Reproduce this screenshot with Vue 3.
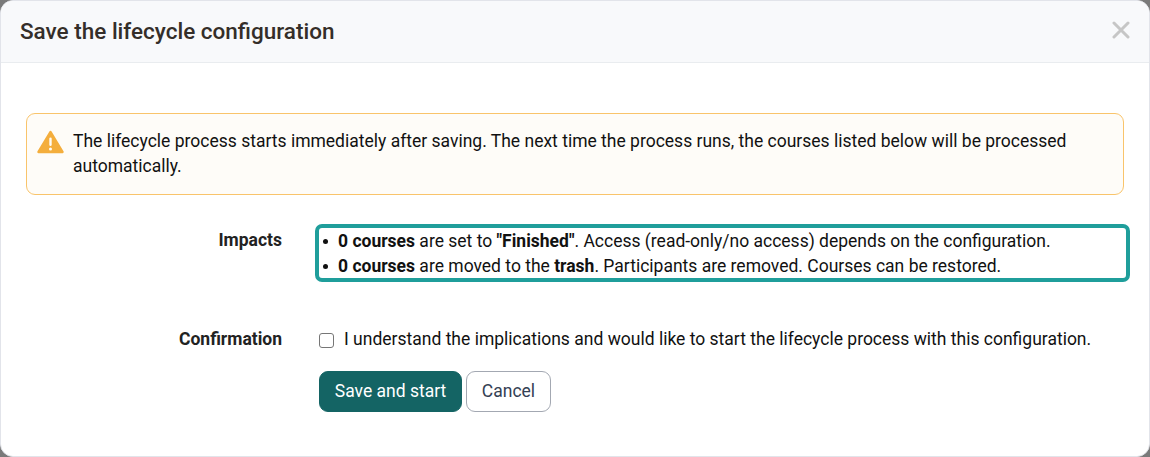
<template>
  <div class="modal">
    <!-- Header -->
    <div class="modal-header">
      <h4 class="modal-title">Save the lifecycle configuration</h4>
      <button class="close-button" aria-label="Close">
        <svg width="18" height="18" viewBox="0 0 18 18">
          <path d="M2 2 L16 16 M16 2 L2 16" stroke="#c6c6c6" stroke-width="3" stroke-linecap="round" fill="none" />
        </svg>
      </button>
    </div>

    <div class="modal-body">
      <!-- Warning -->
      <div class="alert">
        <svg class="alert-icon" width="27" height="24" viewBox="0 0 27 24">
          <path d="M13.5 2.2 L25.4 22 H1.6 Z" fill="#f4ae3d" stroke="#f4ae3d" stroke-width="2.6" stroke-linejoin="round" />
          <rect x="12.3" y="7.5" width="2.4" height="8.5" rx="1.2" fill="#fffdf8" />
          <circle cx="13.5" cy="19" r="1.5" fill="#fffdf8" />
        </svg>
        <p class="alert-text">
          The lifecycle process starts immediately after saving. The next time the process runs, the courses listed below will be processed automatically.
        </p>
      </div>

      <!-- Form -->
      <div class="form-row impacts-row">
        <div class="form-label">Impacts</div>
        <ul class="impacts">
          <li><strong>0 courses</strong> are set to <strong>"Finished"</strong>. Access (read-only/no access) depends on the configuration.</li>
          <li><strong>0 courses</strong> are moved to the <strong>trash</strong>. Participants are removed. Courses can be restored.</li>
        </ul>
      </div>

      <div class="form-row confirm-row">
        <div class="form-label">Confirmation</div>
        <label class="confirm">
          <input type="checkbox" class="confirm-box" />
          <span>I understand the implications and would like to start the lifecycle process with this configuration.</span>
        </label>
      </div>

      <div class="actions">
        <button class="btn btn-primary">Save and start</button>
        <button class="btn btn-default">Cancel</button>
      </div>
    </div>
  </div>
</template>

<script setup>
</script>

<style>
html,
body {
  background: #7a7a7a;
}
</style>

<style scoped>
.modal {
  box-sizing: border-box;
  width: 1150px;
  height: 457px;
  background: #fff;
  border: 1px solid #e2e4ea;
  border-radius: 13px;
  overflow: hidden;
  font-family: Roboto, "Liberation Sans", sans-serif;
  font-size: 17.5px;
  line-height: 25px;
  color: #111;
}

.modal-header {
  display: flex;
  align-items: center;
  justify-content: space-between;
  box-sizing: border-box;
  height: 62px;
  padding: 0 19px;
  background: #f8f9fb;
  border-bottom: 1px solid #e9ecef;
}

.modal-title {
  margin: 0;
  font-size: 22.5px;
  font-weight: 500;
  color: #342e29;
}

.close-button {
  display: flex;
  margin-bottom: 4px;
  padding: 0;
  border: none;
  background: none;
}

.modal-body {
  padding: 50px 25px 0;
}

.alert {
  display: flex;
  gap: 9px;
  box-sizing: border-box;
  width: 1098px;
  height: 82px;
  padding: 15px 20px 0 10px;
  background: #fefcf8;
  border: 1px solid #f9c46b;
  border-radius: 9px;
}

.alert-icon {
  flex: none;
  margin-top: 1px;
}

.alert-text {
  margin: 0;
}

.form-row {
  display: flex;
}

.form-label {
  flex: none;
  width: 256px;
  text-align: right;
  font-weight: 700;
  color: #222;
}

.impacts-row {
  margin-top: 29px;
}

.impacts-row .form-label {
  padding-top: 4px;
}

.impacts {
  flex: none;
  box-sizing: border-box;
  width: 815px;
  height: 58px;
  margin: 0 0 0 33px;
  padding: 1px 0 0 19px;
  list-style: none;
  border: 4px solid #1f9e9b;
  border-radius: 7px;
}

.impacts li::before {
  content: "";
  display: inline-block;
  width: 5px;
  height: 5px;
  margin: 0 10px 0 -15px;
  vertical-align: 3px;
  background: #111;
  border-radius: 50%;
}

.impacts strong {
  font-weight: 700;
}

.confirm-row {
  margin-top: 45px;
}

.confirm {
  display: flex;
  align-items: center;
  margin-left: 37px;
}

.confirm-box {
  flex: none;
  box-sizing: border-box;
  width: 15px;
  height: 15px;
  margin: 1px 10px 0 0;
  appearance: none;
  background: #fff;
  border: 1px solid #767676;
  border-radius: 3px;
}

.actions {
  display: flex;
  gap: 4px;
  margin: 19px 0 0 293px;
}

.btn {
  box-sizing: border-box;
  height: 41px;
  padding: 0 10px 2px;
  font-family: inherit;
  font-size: 17.5px;
  border-radius: 9px;
}

.btn-primary {
  width: 143px;
  color: #fff;
  background: #146464;
  border: 1px solid #146464;
}

.btn-default {
  width: 85px;
  color: #344054;
  background: #fff;
  border: 1px solid #a3a8b2;
}
</style>
